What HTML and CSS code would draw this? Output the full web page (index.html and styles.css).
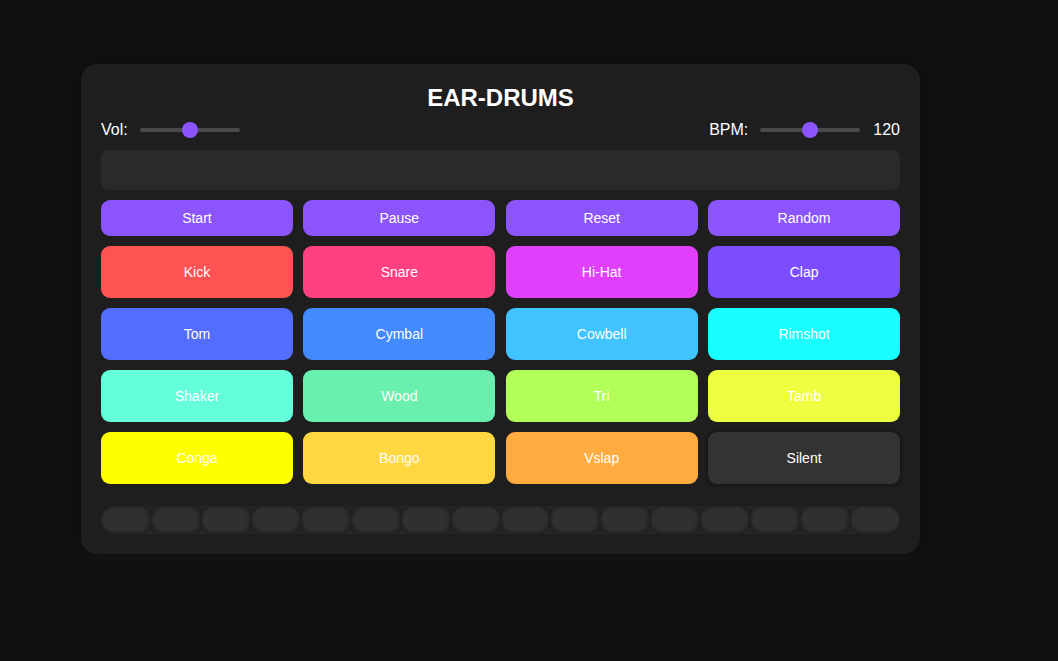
FILE: index.html
```html
<!DOCTYPE html>
<html>
<head>
<meta charset="utf-8">
<link rel="stylesheet" href="styles.css">
</head>
<body>
<div class="card">
  <h1 class="title">EAR-DRUMS</h1>
  <div class="controls">
    <div class="ctl">
      <span class="label">Vol:</span>
      <div class="slider"><div class="thumb"></div></div>
    </div>
    <div class="ctl">
      <span class="label">BPM:</span>
      <div class="slider"><div class="thumb"></div></div>
      <span class="value">120</span>
    </div>
  </div>
  <div class="display"></div>
  <div class="grid">
    <button class="btn ctrl">Start</button>
    <button class="btn ctrl">Pause</button>
    <button class="btn ctrl">Reset</button>
    <button class="btn ctrl">Random</button>
  </div>
  <div class="grid pads">
    <button class="btn pad kick">Kick</button>
    <button class="btn pad snare">Snare</button>
    <button class="btn pad hihat">Hi-Hat</button>
    <button class="btn pad clap">Clap</button>
    <button class="btn pad tom">Tom</button>
    <button class="btn pad cymbal">Cymbal</button>
    <button class="btn pad cowbell">Cowbell</button>
    <button class="btn pad rimshot">Rimshot</button>
    <button class="btn pad shaker">Shaker</button>
    <button class="btn pad wood">Wood</button>
    <button class="btn pad tri">Tri</button>
    <button class="btn pad tamb">Tamb</button>
    <button class="btn pad conga">Conga</button>
    <button class="btn pad bongo">Bongo</button>
    <button class="btn pad vslap">Vslap</button>
    <button class="btn pad silent">Silent</button>
  </div>
  <div class="seq">
    <div class="step"></div><div class="step"></div><div class="step"></div><div class="step"></div>
    <div class="step"></div><div class="step"></div><div class="step"></div><div class="step"></div>
    <div class="step"></div><div class="step"></div><div class="step"></div><div class="step"></div>
    <div class="step"></div><div class="step"></div><div class="step"></div><div class="step"></div>
  </div>
</div>
</body>
</html>
```
FILE: styles.css
```css
html, body {
  margin: 0;
  padding: 0;
  background: #111111;
  font-family: "Liberation Sans", Arial, sans-serif;
  color: #ffffff;
}
body {
  padding: 64px 0 0 81px;
}
.card {
  width: 799px;
  background: #1e1e1e;
  border-radius: 16px;
  padding: 20px;
  box-shadow: 0 0 12px rgba(0,0,0,0.35);
}
.title {
  margin: 0;
  text-align: center;
  font-size: 24px;
  font-weight: bold;
  line-height: 27px;
  color: #ffffff;
}
.controls {
  display: flex;
  justify-content: space-between;
  align-items: center;
  height: 20px;
  margin-top: 9px;
}
.ctl {
  display: flex;
  align-items: center;
}
.label {
  font-size: 16px;
  color: #ffffff;
  margin-right: 12px;
}
.slider {
  position: relative;
  width: 100px;
  height: 4px;
  border-radius: 2px;
  background: #4a4a4a;
}
.thumb {
  position: absolute;
  left: 42px;
  top: -6px;
  width: 16px;
  height: 16px;
  border-radius: 50%;
  background: #8b55fb;
}
.value {
  font-size: 16px;
  margin-left: 13px;
}
.display {
  margin-top: 10px;
  height: 40px;
  border-radius: 8px;
  background: #2a2a2a;
}
.grid {
  display: grid;
  grid-template-columns: repeat(4, 1fr);
  gap: 10px 10.5px;
  margin-top: 10px;
}
.btn {
  border: none;
  border-radius: 9px;
  font-family: "Liberation Sans", Arial, sans-serif;
  font-size: 14px;
  color: #ffffff;
  padding: 0;
}
.ctrl {
  height: 36px;
  background: #8b55fb;
}
.pad {
  height: 52px;
}
.kick { background: #ff5252; }
.snare { background: #ff4081; }
.hihat { background: #e040fb; }
.clap { background: #7c4dff; }
.tom { background: #536dfe; }
.cymbal { background: #448aff; }
.cowbell { background: #40c4ff; }
.rimshot { background: #18ffff; }
.shaker { background: #64ffda; }
.wood { background: #69f0ae; }
.tri { background: #b2ff59; }
.tamb { background: #eeff41; }
.conga { background: #ffff00; }
.bongo { background: #ffd740; }
.vslap { background: #ffab40; }
.silent { background: #333333; box-shadow: 0 0 4px rgba(0,0,0,0.5); }
.seq {
  display: grid;
  grid-template-columns: repeat(16, 1fr);
  margin-top: 22px;
  height: 28px;
  border-radius: 14px;
  background: #282828;
  overflow: hidden;
}
.step {
  background: #303030;
  border-radius: 12px;
  margin: 1px 1px 2px;
  box-shadow: 0 0 6px 2px rgba(0,0,0,0.25);
  filter: blur(1px);
}
```
